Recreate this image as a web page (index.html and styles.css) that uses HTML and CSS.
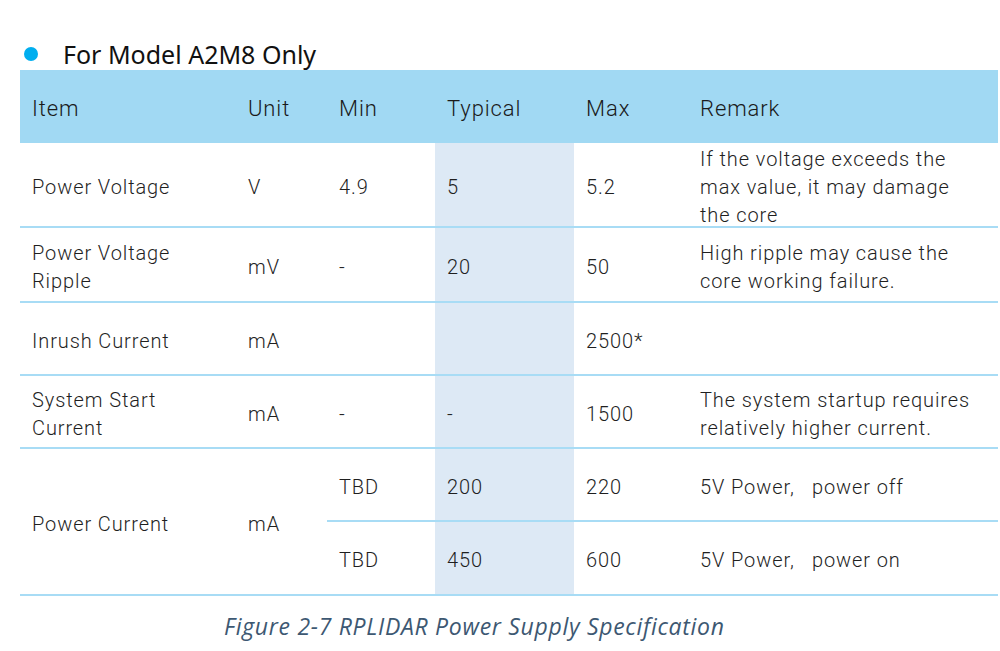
FILE: index.html
```html
<!DOCTYPE html>
<html lang="en">
<head>
<meta charset="utf-8">
<title>RPLIDAR Power Supply Specification</title>
<link rel="stylesheet" href="styles.css">
</head>
<body>
<div class="page">
  <h2 class="title"><span class="bullet"></span>For Model A2M8 Only</h2>
  <div class="spec">
    <div class="cell head">Item</div>
    <div class="cell head">Unit</div>
    <div class="cell head">Min</div>
    <div class="cell head">Typical</div>
    <div class="cell head">Max</div>
    <div class="cell head">Remark</div>

    <div class="cell item">Power Voltage</div>
    <div class="cell">V</div>
    <div class="cell">4.9</div>
    <div class="cell typ">5</div>
    <div class="cell">5.2</div>
    <div class="cell remark">If the voltage exceeds the max value, it may damage the core</div>

    <div class="cell item">Power Voltage Ripple</div>
    <div class="cell">mV</div>
    <div class="cell">-</div>
    <div class="cell typ">20</div>
    <div class="cell">50</div>
    <div class="cell remark">High ripple may cause the core working failure.</div>

    <div class="cell item">Inrush Current</div>
    <div class="cell">mA</div>
    <div class="cell"></div>
    <div class="cell typ"></div>
    <div class="cell">2500*</div>
    <div class="cell remark"></div>

    <div class="cell item">System Start Current</div>
    <div class="cell">mA</div>
    <div class="cell">-</div>
    <div class="cell typ">-</div>
    <div class="cell">1500</div>
    <div class="cell remark">The system startup requires relatively higher current.</div>

    <div class="cell item span2">Power Current</div>
    <div class="cell span2">mA</div>
    <div class="cell">TBD</div>
    <div class="cell typ">200</div>
    <div class="cell">220</div>
    <div class="cell remark">5V Power,&nbsp;&nbsp; power off</div>

    <div class="cell">TBD</div>
    <div class="cell typ">450</div>
    <div class="cell">600</div>
    <div class="cell remark">5V Power,&nbsp;&nbsp; power on</div>
  </div>
  <p class="caption">Figure 2-7 RPLIDAR Power Supply Specification</p>
</div>
</body>
</html>
```
FILE: styles.css
```css
html, body {
  margin: 0;
  padding: 0;
  background: #ffffff;
}

.page {
  padding: 38px 0 0 20px;
  width: 978px;
}

.title {
  margin: 0 0 0 4px;
  height: 32px;
  display: flex;
  align-items: center;
  gap: 25px;
  font-family: "Noto Sans", "Open Sans", sans-serif;
  font-weight: 400;
  font-size: 25px;
  color: #111111;
}

.bullet {
  width: 14px;
  height: 14px;
  border-radius: 50%;
  background: #00aeef;
  flex: none;
}

.spec {
  display: grid;
  grid-template-columns: 216px 91px 108px 139px 114px 310px;
  grid-template-rows: 73px 85px 75px 73px 73px 73px 74px;
  font-family: "Roboto", "Liberation Sans", sans-serif;
  font-weight: 300;
  font-size: 20px;
  letter-spacing: 0.9px;
  color: #1f1f1f;
  line-height: 28px;
}

.cell {
  box-sizing: border-box;
  display: flex;
  align-items: center;
  padding: 4px 8px 0 12px;
  border-bottom: 2px solid #a8dcf5;
}

.item {
  padding-right: 40px;
}

.remark {
  padding-right: 20px;
}

.head {
  background: #a1d9f3;
  border-bottom: none;
  padding-top: 4px;
  font-size: 22px;
  letter-spacing: 0.9px;
  color: #1a1a1a;
}

.typ {
  background: #dde9f5;
}

.span2 {
  grid-row: span 2;
}

.caption {
  margin: 14px 0 0 204px;
  font-family: "Open Sans", "Noto Sans", sans-serif;
  font-style: italic;
  font-size: 23px;
  letter-spacing: 0.7px;
  color: #3d5872;
}
```
